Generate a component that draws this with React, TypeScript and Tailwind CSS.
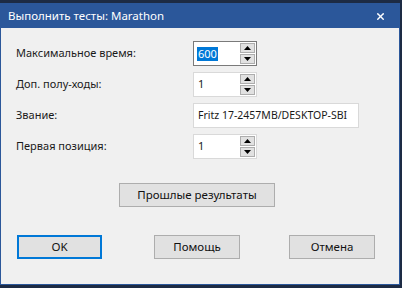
import { X } from "lucide-react";

function SpinBox({ value, focused }: { value: string; focused?: boolean }) {
  return (
    <div
      className={`flex h-[25px] w-[64px] items-stretch bg-white border ${
        focused ? "border-[#7a7a7a]" : "border-[#d9d9d9]"
      }`}
    >
      <div className="flex flex-1 items-center pl-[3px]">
        {focused ? (
          <span className="bg-[#0078d7] px-[1px] leading-[14px] text-white">{value}</span>
        ) : (
          <span className="pl-[1px]">{value}</span>
        )}
      </div>
      <div className="flex w-[16px] flex-col gap-[1px] py-[1px] pr-[1px]">
        <div className="flex flex-1 items-center justify-center border border-[#adadad] bg-[#e1e1e1]">
          <svg width="7" height="4" viewBox="0 0 7 4">
            <path d="M3.5 0 L7 4 L0 4 Z" fill="#000" />
          </svg>
        </div>
        <div className="flex flex-1 items-center justify-center border border-[#adadad] bg-[#e1e1e1]">
          <svg width="7" height="4" viewBox="0 0 7 4">
            <path d="M0 0 L7 0 L3.5 4 Z" fill="#000" />
          </svg>
        </div>
      </div>
    </div>
  );
}

function Button({ label, width, primary }: { label: string; width: string; primary?: boolean }) {
  return (
    <button
      className={`flex h-[24px] items-center justify-center bg-[#e1e1e1] text-[11.5px] text-[#111] ${width} ${
        primary ? "border-2 border-[#0078d7]" : "border border-[#adadad]"
      }`}
    >
      {label}
    </button>
  );
}

export default function App() {
  const font = { fontFamily: '"Noto Sans", "Open Sans", sans-serif' };

  return (
    <div className="h-[288px] w-[402px] overflow-hidden bg-[#1d2b44] pt-[3px]" style={font}>
      <div className="flex h-[282px] w-[400px] flex-col border border-[#2b579a] bg-[#f0f0f0]">
        {/* Title bar */}
        <div className="flex h-[24px] items-center justify-between bg-[#2b579a] pl-[7px] pr-[13px] text-[11.5px] text-white">
          <span>Выполнить тесты: Marathon</span>
          <X className="h-[11px] w-[11px]" strokeWidth={3} />
        </div>

        {/* Fields */}
        <div className="mt-[13px] grid grid-cols-[177px_1fr] gap-y-[6px] pl-[15px] text-[11px] text-[#1a1a1a]">
          <div className="flex h-[25px] items-center">Максимальное время:</div>
          <SpinBox value="600" focused />
          <div className="flex h-[25px] items-center">Доп. полу-ходы:</div>
          <SpinBox value="1" />
          <div className="flex h-[25px] items-center">Звание:</div>
          <div className="flex h-[25px] w-[166px] items-center overflow-hidden whitespace-nowrap border border-[#d9d9d9] bg-white pl-[4px] text-[10.5px]">
            Fritz 17-2457MB/DESKTOP-SBI
          </div>
          <div className="flex h-[25px] items-center">Первая позиция:</div>
          <SpinBox value="1" />
        </div>

        {/* Past results */}
        <div className="mt-[24px] pl-[118px]">
          <Button label="Прошлые результаты" width="w-[156px]" />
        </div>

        {/* Dialog buttons */}
        <div className="mt-[28px] flex pl-[16px]">
          <Button label="OK" width="w-[85px]" primary />
          <div className="ml-[52px]">
            <Button label="Помощь" width="w-[86px]" />
          </div>
          <div className="ml-[49px]">
            <Button label="Отмена" width="w-[86px]" />
          </div>
        </div>
      </div>
    </div>
  );
}
